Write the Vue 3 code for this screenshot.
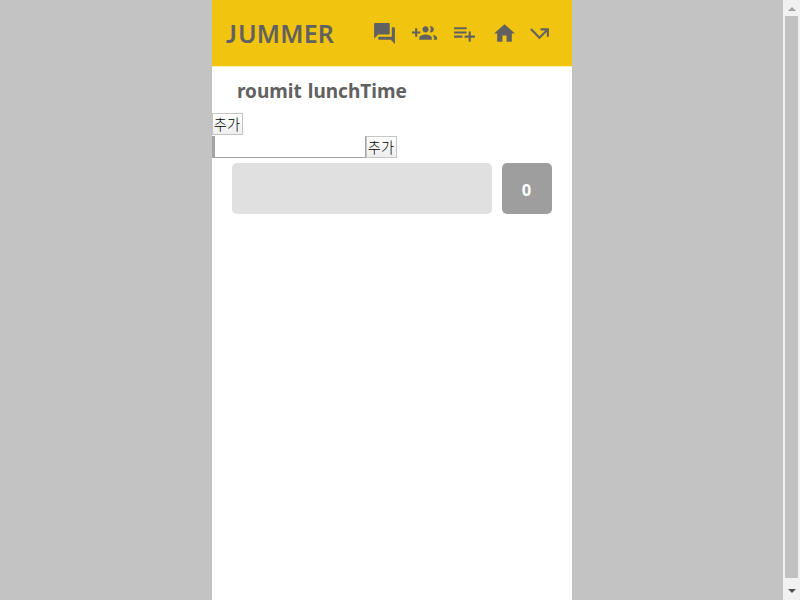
<script setup>
const actions = [
  { name: 'chat', d: 'M21 6h-2v9H6v2c0 .55.45 1 1 1h11l4 4V7c0-.55-.45-1-1-1zm-4 6V3c0-.55-.45-1-1-1H3c-.55 0-1 .45-1 1v14l4-4h10c.55 0 1-.45 1-1z' },
  { name: 'invite', d: 'M8 10H5V7H3v3H0v2h3v3h2v-3h3v-2zm10 1c1.66 0 2.99-1.34 2.99-3S19.66 5 18 5c-.32 0-.63.05-.91.14.57.81.9 1.79.9 2.86s-.34 2.04-.9 2.86c.28.09.59.14.91.14zm-5 0c1.66 0 2.99-1.34 2.99-3S14.66 5 13 5c-1.66 0-3 1.34-3 3s1.34 3 3 3zm6.62 2.16c.83.73 1.38 1.66 1.38 2.84v2h3v-2c0-1.54-2.37-2.49-4.38-2.84zM13 13c-2 0-6 1-6 3v2h12v-2c0-2-4-3-6-3z' },
  { name: 'add', d: 'M14 10H2v2h12v-2zm0-4H2v2h12V6zm4 8v-4h-2v4h-4v2h4v4h2v-4h4v-2h-4zM2 16h8v-2H2v2z' },
  { name: 'home', d: 'M10 20v-6h4v6h5v-8h3L12 3 2 12h3v8z' },
  { name: 'leave', d: 'M3 8.41l9 9 7-7V15h2V7h-8v2h4.59L12 14.59 4.41 7 3 8.41z' },
]
const votes = 0
</script>

<template>
  <div class="screen">
    <div class="backdrop">
      <main class="app">
        <header class="bar">
          <h1 class="brand"><span class="initial">J</span>UMMER</h1>
          <nav class="actions">
            <svg v-for="a in actions" :key="a.name" :class="['icon', a.name]" viewBox="0 0 24 24"><path :d="a.d" /></svg>
          </nav>
        </header>
        <h2 class="title">roumit lunchTime</h2>
        <div class="row"><button class="btn">추가</button></div>
        <div class="row form">
          <input class="field" type="text" />
          <button class="btn">추가</button>
        </div>
        <div class="item">
          <div class="menu"></div>
          <div class="count">{{ votes }}</div>
        </div>
      </main>
    </div>
    <div class="scroll">
      <svg class="arrow up" viewBox="0 0 8 4"><path d="M0 4L4 0L8 4Z" /></svg>
      <div class="thumb"></div>
      <svg class="arrow down" viewBox="0 0 8 4"><path d="M0 0H8L4 4Z" /></svg>
    </div>
  </div>
</template>

<style>
body { margin: 0; overflow: hidden; }
</style>

<style scoped>
* { box-sizing: border-box; }
.screen { display: flex; width: 800px; height: 600px; font-family: "Noto Sans", "Noto Sans CJK KR", sans-serif; color: #616161; }
.backdrop { width: 783px; display: flex; background: #c3c3c3; padding-left: 212px; }
.app { width: 360px; height: 600px; background: #fff; }
.bar { height: 67px; background: #f1c40f; border-bottom: 1px solid #fcefc1; display: flex; align-items: flex-start; justify-content: space-between; padding: 0 20px 0 14px; }
.brand { margin: 0; font-size: 25px; line-height: 67px; font-weight: 600; letter-spacing: .2px; }
.initial { font-family: Lato, sans-serif; font-weight: 700; margin-right: 1px; }
.actions { display: flex; gap: 15px; padding-top: 21px; }
.icon { width: 25px; height: 25px; fill: #616161; display: block; }
.leave { margin-left: -5px; }
.title { margin: 0; height: 46px; padding-left: 25px; font-size: 19px; line-height: 48px; font-weight: 700; letter-spacing: 0; word-spacing: 1px; white-space: nowrap; }
.row { display: flex; height: 23px; }
.btn { width: 31px; height: 22px; padding: 0 1px 1px 0; border: 1px solid #c4c6c4; background: linear-gradient(#fff, #eee); color: #000; font: 300 14.3px/19px "Noto Sans CJK KR", sans-serif; white-space: nowrap; display: flex; justify-content: center; align-items: center; }
.form { height: 23px; }
.field { width: 154px; height: 22px; padding: 0; border: 0 solid #a4a4a4; border-left: 3px solid #a4a4a4; border-right-width: 1px; box-shadow: 0 -1px 0 #a4a4a4 inset; outline: 0; }
.item { display: flex; gap: 10px; padding: 4px 20px 0; }
.menu { width: 260px; height: 51px; border-radius: 5px; background: #e0e0e0; }
.count { width: 50px; height: 51px; padding-right: 1px; border-radius: 5px; background: #9e9e9e; color: #fff; font-size: 16.5px; line-height: 54px; font-weight: 700; text-align: center; }
.scroll { width: 17px; height: 600px; background: #f1f1f1; display: flex; flex-direction: column; align-items: center; }
.thumb { width: 13px; height: 562px; background: #c1c1c1; }
.arrow { width: 8px; height: 4px; display: block; }
.up { margin: 7px 0 5px; fill: #a3a3a3; }
.down { margin-top: 11px; fill: #505050; }
</style>
